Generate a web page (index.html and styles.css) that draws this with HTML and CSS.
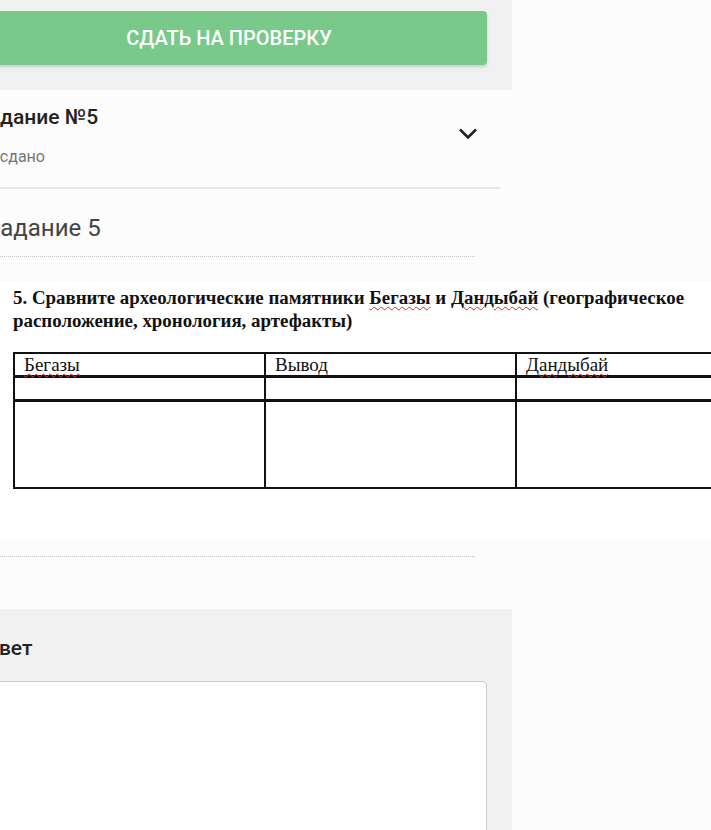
FILE: index.html
```html
<!DOCTYPE html>
<html>
<head>
    <meta charset="utf-8">
    <link rel="stylesheet" href="styles.css">
</head>
<body>
    <div class="column">
        <div class="submit-bar">
            <button class="btn-submit">СДАТЬ НА ПРОВЕРКУ</button>
        </div>

        <div class="task">
            <div class="task-header">
                <div>
                    <div class="task-title">Задание №5</div>
                    <div class="task-status">Не сдано</div>
                </div>
                <svg class="chevron" width="24" height="24" viewBox="0 0 24 24">
                    <polyline points="4,8.5 12,16.5 20,8.5" fill="none" stroke="#222" stroke-width="2.6"/>
                </svg>
            </div>

            <h2 class="task-name">Задание 5</h2>

            <div class="task-body">
                <div class="scan">
                    <p class="scan-text">5. Сравните археологические памятники <span class="typo">Бегазы</span> и <span class="typo">Дандыбай</span> (географическое расположение, хронология, артефакты)</p>
                    <table class="scan-table">
                        <tr class="head">
                            <td><span class="typo">Бегазы</span></td>
                            <td>Вывод</td>
                            <td><span class="typo">Дандыбай</span></td>
                        </tr>
                        <tr class="sub">
                            <td></td>
                            <td></td>
                            <td></td>
                        </tr>
                        <tr class="body">
                            <td></td>
                            <td></td>
                            <td></td>
                        </tr>
                    </table>
                </div>
            </div>
        </div>

        <div class="answer">
            <div class="answer-title">Ответ</div>
            <div class="answer-input"></div>
        </div>
    </div>
</body>
</html>
```

FILE: styles.css
```css
* {
    box-sizing: border-box;
    margin: 0;
    padding: 0;
}

body {
    background: #fcfcfc;
    font-family: Roboto, "Noto Sans", sans-serif;
    color: #222;
    overflow: hidden;
    height: 830px;
}

.column {
    width: 552px;
    margin-left: -40px;
}

.submit-bar {
    background: #f1f1f2;
    padding: 11px 25px 25px 11px;
}

.btn-submit {
    display: block;
    width: 100%;
    height: 54px;
    background: #78c98a;
    color: #fff;
    border: none;
    border-radius: 4px;
    box-shadow: 0 2px 3px rgba(0, 0, 0, 0.15);
    font-family: Roboto, sans-serif;
    font-size: 20px;
    font-weight: 500;
}

.task {
    background: #fcfcfc;
}

.task-header {
    display: flex;
    align-items: center;
    justify-content: space-between;
    margin-right: 12px;
    padding: 15px 20px 20px 16px;
    border-bottom: 2px solid #e6e6e6;
}

.task-title {
    font-size: 21px;
    line-height: 24px;
    font-weight: 500;
    color: #222;
}

.task-status {
    margin-top: 18px;
    font-size: 16px;
    line-height: 20px;
    color: #777;
}

.chevron {
    margin-top: -6px;
}

.task-name {
    margin: 25px 37px 0 26px;
    padding-bottom: 14px;
    border-bottom: 1px dotted #c8c8c8;
    font-size: 24px;
    line-height: 28px;
    font-weight: 400;
    color: #444;
}

.task-body {
    margin: 25px 37px 0 40px;
    padding-bottom: 15px;
    border-bottom: 1px dotted #c8c8c8;
}

.scan {
    width: 780px;
    background: #fff;
    padding: 4px 0 52px 13px;
    font-family: "Liberation Serif", "DejaVu Serif", serif;
    color: #111;
}

.scan-text {
    font-size: 18.9px;
    line-height: 23px;
    font-weight: 700;
    width: 700px;
}

.typo {
    text-decoration: underline wavy #c0392b;
    text-decoration-thickness: 1px;
    text-underline-offset: 2px;
}

.scan-table {
    margin-top: 20px;
    border-collapse: collapse;
    table-layout: fixed;
    width: 753px;
}

.scan-table td {
    width: 251px;
    border-left: 2px solid #111;
    border-right: 2px solid #111;
    padding: 0 9px;
    font-size: 19px;
    vertical-align: top;
}

.scan-table .head td {
    height: 23px;
    line-height: 21px;
    border-top: 2px solid #111;
    border-bottom: 3px solid #111;
}

.scan-table .sub td {
    height: 24px;
    border-bottom: 3px solid #111;
}

.scan-table .body td {
    height: 87px;
    border-bottom: 2px solid #111;
}

.answer {
    margin-top: 52px;
    background: #f1f1f2;
    padding: 27px 25px 0 14px;
    height: 240px;
}

.answer-title {
    font-size: 21px;
    line-height: 24px;
    font-weight: 500;
    color: #222;
}

.answer-input {
    margin-top: 21px;
    height: 200px;
    background: #fff;
    border: 1px solid #c9cfd3;
    border-radius: 4px;
}
```
